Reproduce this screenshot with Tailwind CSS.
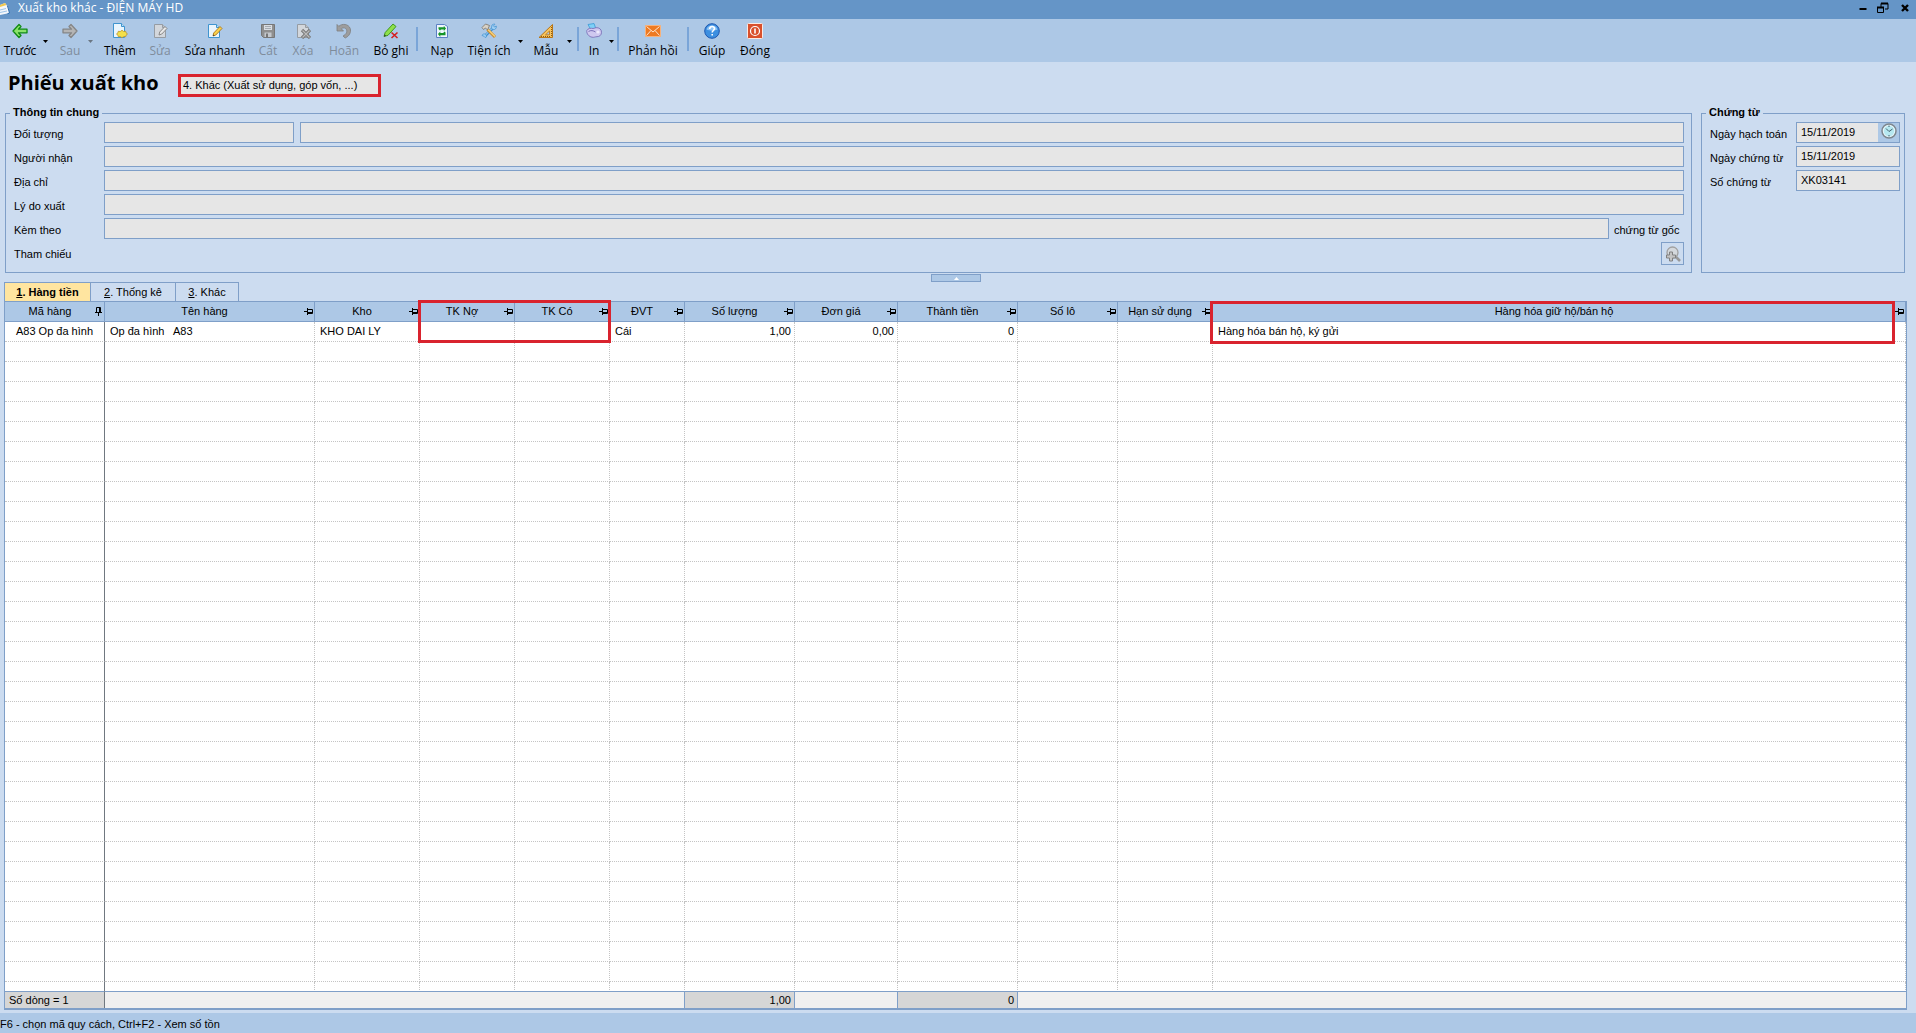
<!DOCTYPE html>
<html lang="vi">
<head>
    <meta charset="UTF-8">
    <meta name="viewport" content="width=device-width, initial-scale=1.0">
    <title>Xuất kho khác - ĐIỆN MÁY HD</title>
    <script src="https://cdn.jsdelivr.net/npm/@tailwindcss/browser@4"></script>
</head>
<body class="h-screen flex flex-col overflow-hidden bg-[#ccdcf0] text-black text-[11px] leading-4 font-['Liberation_Sans',Arial,sans-serif]">

    <!-- Shared icons -->
    <svg class="hidden">
        <symbol id="pin" viewBox="0 0 9 7"><path d="M0 3.500h3M3.500 0v7M4 1.500h4.500v4H4M4 4.500h4" fill="none" stroke="#000"/></symbol>
        <symbol id="pinDown" viewBox="0 0 7 9"><path d="M3.500 9V6M0 5.500h7M1.500 5V0.500h4V5M4.500 1v4" fill="none" stroke="#000"/></symbol>
        <symbol id="page" viewBox="0 0 16 16"><path d="M2.500 1.500h8l3 3v10h-11z" fill="#eaf5fd" stroke="#3f94cf"/><path d="M10.500 1.500v3h3" fill="#bfe0f5" stroke="#3f94cf"/></symbol>
        <symbol id="pageGray" viewBox="0 0 16 16"><path d="M2.500 1.500h8l3 3v10h-11z" fill="#d3d7dc" stroke="#969ca3"/><path d="M10.500 1.500v3h3" fill="#bcc1c7" stroke="#969ca3"/></symbol>
    </svg>

    <!-- Title bar -->
    <header class="h-[19px] shrink-0 flex items-center bg-[#6595c7] pr-[7px] text-white">
        <svg class="w-3 h-4 shrink-0" viewBox="0 0 12 16"><path d="M0 3l5-2 3 4 1.500 6-9.500 2z" fill="#f3f7fb"/><path d="M0 3l5-2 1.500 2L0 5z" fill="#f1c84e"/><path d="M0 8l6-1.500M0 10.500l7-1.500" stroke="#9cc3e8"/><path d="M7.500 4l2 7-2 .8" fill="none" stroke="#2f6fb0"/></svg>
        <span class="flex-1 pl-1.5 pb-1 text-[12px] font-['Open_Sans','Noto_Sans',sans-serif]">Xuất kho khác - ĐIỆN MÁY HD</span>
        <button type="button" aria-label="Thu nhỏ" class="mr-2.5 pb-1"><svg class="w-2 h-2" viewBox="0 0 8 8"><path d="M0.500 5h7" stroke="#000" stroke-width="2"/></svg></button>
        <button type="button" aria-label="Khôi phục" class="mr-3 pb-1"><svg class="w-3 h-3" viewBox="0 0 12 12"><path d="M4 5V1.500h7V7H8M0.500 5.500h6v5h-6z" fill="none" stroke="#000"/><path d="M4 1.500h7M0 5.500h7" stroke="#000" stroke-width="2"/></svg></button>
        <button type="button" aria-label="Đóng cửa sổ" class="pb-1"><svg class="w-2 h-2" viewBox="0 0 8 8"><path d="M1 1l6 6M7 1L1 7" stroke="#000" stroke-width="2.400"/></svg></button>
    </header>

    <!-- Toolbar -->
    <nav class="h-[43px] shrink-0 flex items-start bg-[#adc8e6] pt-1 whitespace-nowrap text-[12px] font-['Open_Sans','Noto_Sans',sans-serif]">
        <button type="button" class="w-10 flex flex-col items-center gap-1">
            <svg class="w-4 h-4" viewBox="0 0 16 16"><path d="M7 1.500L1 8l6 6.500 2-2L6.500 9.800H15V6.200H6.500L9 3.500z" fill="#8be36a" stroke="#0f8a12" stroke-width="1.300" stroke-linejoin="round"/></svg>
            <span>Trước</span>
        </button>
        <button type="button" aria-label="Trước: tùy chọn" class="w-3 h-9 pl-[3px] flex items-center"><svg class="w-[5px] h-[3px]" viewBox="0 0 5 3"><path d="M0 0h5L2.500 3z"/></svg></button>
        <button type="button" class="w-9 flex flex-col items-center gap-1 text-[#7f8c9b]">
            <svg class="w-4 h-4" viewBox="0 0 16 16"><path d="M9 1.500L15 8l-6 6.500-2-2L9.500 9.800H1V6.200h8.500L7 3.500z" fill="#b5b5b5" stroke="#858585" stroke-width="1.300" stroke-linejoin="round"/></svg>
            <span>Sau</span>
        </button>
        <button type="button" aria-label="Sau: tùy chọn" class="w-[10px] h-9 flex items-center"><svg class="w-[5px] h-[3px]" viewBox="0 0 5 3"><path d="M0 0h5L2.500 3z" fill="#6a7683"/></svg></button>
        <button type="button" class="w-11 flex flex-col items-center gap-1">
            <svg class="w-4 h-4" viewBox="0 0 16 16"><path d="M1.500 .5h8l3 3v11h-11z" fill="#eaf5fd" stroke="#3f94cf"/><path d="M9.500 .5v3h3" fill="#bfe0f5" stroke="#3f94cf"/><path d="M10 7.300l1.700 1.200 2-.2.300 1.400 1.500 1.300-1.500 1.300-.3 1.400-2-.2L10 14.700l-1.700-1.200-2 .2-.3-1.400L4.500 11 6 9.700l.3-1.400 2 .2z" fill="#f3e04a" stroke="#b8922a" stroke-width=".8"/></svg>
            <span>Thêm</span>
        </button>
        <button type="button" class="w-9 flex flex-col items-center gap-1 text-[#7f8c9b]">
            <svg class="w-4 h-4" viewBox="0 0 16 16"><use href="#pageGray"/><path d="M7 12l.7-3L13 3.500l2 2L9.800 11z" fill="#e8e8e8" stroke="#888"/></svg>
            <span>Sửa</span>
        </button>
        <button type="button" class="w-[74px] flex flex-col items-center gap-1">
            <svg class="w-4 h-4" viewBox="0 0 16 16"><path d="M1.500 1.500h8l3 3v10h-11z" fill="#eaf5fd" stroke="#3f94cf"/><path d="M9.500 1.500v3h3" fill="#bfe0f5" stroke="#3f94cf"/><path d="M6 13l.7-3L13 3.500l2 2L8.800 12z" fill="#fbd24c" stroke="#a9761c" stroke-width=".9"/><path d="M6 13l.4-1.600 1.200 1.200z" fill="#333"/></svg>
            <span>Sửa nhanh</span>
        </button>
        <button type="button" class="w-8 flex flex-col items-center gap-1 text-[#7f8c9b]">
            <svg class="w-4 h-4" viewBox="0 0 16 16"><path d="M1.500 1.500h13v13h-11l-2-2z" fill="#8f8f8f" stroke="#777"/><path d="M4 2h8v5H4z" fill="#d9dde2"/><path d="M4.500 9.500h7V14h-7z" fill="#c4c8cd"/><path d="M6 10.500h2V14H6z" fill="#777"/><path d="M5 3.500h6M5 5.500h6" stroke="#a5abb2"/></svg>
            <span>Cất</span>
        </button>
        <button type="button" class="w-[38px] flex flex-col items-center gap-1 text-[#7f8c9b]">
            <svg class="w-4 h-4" viewBox="0 0 16 16"><use href="#pageGray"/><path d="M7 7l8 8M15 7L7 15" stroke="#777" stroke-width="3.200"/><path d="M7.500 7.500l7 7M14.500 7.500L7.500 14.500" stroke="#bbb" stroke-width="1.200"/></svg>
            <span>Xóa</span>
        </button>
        <button type="button" class="w-11 flex flex-col items-center gap-1 text-[#7f8c9b]">
            <svg class="w-4 h-4" viewBox="0 0 16 16"><path d="M1 1.500l1.800 1.800C6 .3 12.500.7 14.200 5.500c1.200 3.700-1 7.800-5 9.500L7 13c3.200-1.600 4.400-4 3.500-6.300C9.700 4.500 7 4.300 5.300 5.800L7.500 8H1z" fill="#9d9d9d" stroke="#7d7d7d" stroke-width=".8"/></svg>
            <span>Hoãn</span>
        </button>
        <button type="button" class="w-[50px] flex flex-col items-center gap-1">
            <svg class="w-4 h-4" viewBox="0 0 16 16"><path d="M1 13.500l1.200-4L10 1l3 2.500-8 8.800z" fill="#8fe04a" stroke="#3e9a1c"/><path d="M1 13.500l.6-2 1.500 1.300z" fill="#333"/><path d="M8.500 9.500l6 5.500M14.500 9.500l-6 5.500" stroke="#d41f1f" stroke-width="1.600"/></svg>
            <span>Bỏ ghi</span>
        </button>
        <span class="w-[2px] h-6 mt-1 mr-1 bg-[#7aa5d8]"></span>
        <button type="button" class="w-10 flex flex-col items-center gap-1">
            <svg class="w-4 h-4" viewBox="0 0 16 16"><path d="M2.500 1.500h8l3 2v11h-11z" fill="#eef6fd" stroke="#5b7fc4"/><path d="M4.500 6V4.200h5.300V2.800L12 5.500 9.800 8V6.500H7L6 7.500zM11.500 9.500v2.800H6.300V14L4 11l2.300-2.500V10h2.900l1.300-1.500z" fill="#149428"/></svg>
            <span>Nạp</span>
        </button>
        <button type="button" class="w-[54px] flex flex-col items-center gap-1">
            <svg class="w-4 h-4" viewBox="0 0 16 16"><path d="M4 13L12 5" stroke="#3f8fd0" stroke-width="2.800"/><path d="M4 12.500L11.500 5" stroke="#b9def7"/><path d="M11 2c1-1 2.500-1 3-.8l-1.500 1.600 1 1.200L15.300 3c.3 1.200-.3 3-1.800 3.500-1.500.4-3-.5-3-2zM1 12.500c.5-1.500 2-2 3.500-1.200 1.200 1 1.200 2.500 0 3.500l-1.600-1.600z" fill="#9fd0f4" stroke="#3f8fd0" stroke-width=".7"/><path d="M6.500 6.500l7.500 7.500" stroke="#c98b30" stroke-width="3"/><path d="M7 6.500l7 7" stroke="#f7d27a" stroke-width="1.400"/><path d="M1 4.500L4.500 1l4 1.500L6.500 7 4.500 5 2.500 6.500z" fill="#d9d2c6" stroke="#7a7166" stroke-width=".8"/></svg>
            <span>Tiện ích</span>
        </button>
        <button type="button" aria-label="Tiện ích: tùy chọn" class="w-[9px] h-9 pl-[2px] flex items-center"><svg class="w-[5px] h-[3px]" viewBox="0 0 5 3"><path d="M0 0h5L2.500 3z"/></svg></button>
        <button type="button" class="w-[42px] flex flex-col items-center gap-1">
            <svg class="w-4 h-4" viewBox="0 0 16 16"><path d="M14.500 1.500v13H1z" fill="#f7c35c" stroke="#b87516" stroke-linejoin="round"/><path d="M11.500 8v3.800H7.500z" fill="#adc8e6" stroke="#b87516" stroke-width=".8"/><path d="M3 13.500h10M13.500 4v9" stroke="#8a5a14" stroke-dasharray="1 1"/></svg>
            <span>Mẫu</span>
        </button>
        <button type="button" aria-label="Mẫu: tùy chọn" class="w-[10px] h-9 flex items-center"><svg class="w-[5px] h-[3px]" viewBox="0 0 5 3"><path d="M0 0h5L2.500 3z"/></svg></button>
        <span class="w-[2px] h-6 mt-1 bg-[#7aa5d8]"></span>
        <button type="button" class="w-[30px] flex flex-col items-center gap-1">
            <svg class="w-4 h-4" viewBox="0 0 16 16"><path d="M2 1.500l6-1L10 6 5 7z" fill="#7fd0f7" stroke="#3a9bd6" stroke-width=".8"/><path d="M.8 7.500C2 5.200 5 5 7 5.500l3-.8c3-.3 5.500 1.500 5.500 4.500s-2 4.500-4.500 4.500c-2 0-3 1-5 .5-3-.5-5.700-3.500-5.200-6.700z" fill="#cfc8ef" stroke="#7a70b8" stroke-width=".9"/><path d="M2.500 8.500c2-1.500 5-1 7 .5" fill="none" stroke="#7a70b8"/><circle cx="12" cy="9" r="1.600" fill="#eeeafc"/></svg>
            <span>In</span>
        </button>
        <button type="button" aria-label="In: tùy chọn" class="w-2 h-9 flex items-center"><svg class="w-[5px] h-[3px]" viewBox="0 0 5 3"><path d="M0 0h5L2.500 3z"/></svg></button>
        <span class="w-[2px] h-6 mt-1 bg-[#7aa5d8]"></span>
        <button type="button" class="w-[68px] flex flex-col items-center gap-1">
            <svg class="w-4 h-4" viewBox="0 0 16 16"><path d="M.5 2.500h15v11H.5z" fill="#ee7a22" stroke="#f6b27c"/><path d="M1.500 3.500L8 9l6.500-5.500M1.500 12.500L6 7.500M14.500 12.500L10 7.500" fill="none" stroke="#fde3cc"/></svg>
            <span>Phản hồi</span>
        </button>
        <span class="w-[2px] h-6 mt-1 mr-0.5 bg-[#7aa5d8]"></span>
        <button type="button" class="w-[42px] flex flex-col items-center gap-1">
            <svg class="w-4 h-4" viewBox="0 0 16 16"><circle cx="8" cy="8" r="7.300" fill="#3d8fe0" stroke="#1d57b0"/><path d="M2.500 6.500a5.800 5.800 0 0 1 11 0c-3 1.500-8 1.500-11 0z" fill="#8fc4f6"/><path d="M5.700 6c0-3.200 4.800-3.200 4.800-.4C10.500 7.500 8.200 7.500 8.200 9.500M8.200 11v1.600" fill="none" stroke="#fff" stroke-width="1.600"/></svg>
            <span>Giúp</span>
        </button>
        <button type="button" class="w-11 flex flex-col items-center gap-1">
            <svg class="w-4 h-4" viewBox="0 0 16 16"><rect x=".5" y=".5" width="15" height="15" rx="1" fill="#d9502c" stroke="#fbe9e2"/><circle cx="8" cy="8" r="4.500" fill="none" stroke="#fff" stroke-width="1.200"/><path d="M8 5.500v5" stroke="#fff" stroke-width="1.600"/></svg>
            <span>Đóng</span>
        </button>
    </nav>

    <!-- Voucher heading -->
    <div class="h-[43px] shrink-0 flex items-center pl-2">
        <h1 class="w-[170px] pb-0.5 whitespace-nowrap text-[20px] leading-7 font-bold font-['Open_Sans','Noto_Sans',sans-serif]">Phiếu xuất kho</h1>
        <input type="text" readonly aria-label="Loại phiếu" value="4. Khác (Xuất sử dụng, góp vốn, ...)" class="w-[203px] h-[23px] mt-1 px-0.5 pb-0.5 border-3 border-[#d9232e] bg-[#e6e6e6]">
    </div>

    <!-- General info and voucher info -->
    <div class="shrink-0 flex gap-[9px] pl-[5px] pr-[11px]">
        <fieldset class="flex-1 min-w-0 border border-[#7f9fc8] pl-2 pr-[7px] pt-px pb-[7px]">
            <legend class="-ml-1 px-[3px] pb-0.5 leading-[14px] font-bold">Thông tin chung</legend>
            <div class="flex flex-col gap-[3px]">
                <div class="flex">
                    <label for="objectCode" class="w-[90px] pt-1">Đối tượng</label>
                    <input id="objectCode" type="text" readonly class="w-[190px] h-[21px] mr-1.5 px-1 border border-[#7f9fc8] bg-[#e6e6e6]">
                    <input type="text" readonly aria-label="Tên đối tượng" class="flex-1 h-[21px] px-1 border border-[#7f9fc8] bg-[#e6e6e6]">
                </div>
                <div class="flex">
                    <label for="receiver" class="w-[90px] pt-1">Người nhận</label>
                    <input id="receiver" type="text" readonly class="flex-1 h-[21px] px-1 border border-[#7f9fc8] bg-[#e6e6e6]">
                </div>
                <div class="flex">
                    <label for="address" class="w-[90px] pt-1">Địa chỉ</label>
                    <input id="address" type="text" readonly class="flex-1 h-[21px] px-1 border border-[#7f9fc8] bg-[#e6e6e6]">
                </div>
                <div class="flex">
                    <label for="reason" class="w-[90px] pt-1">Lý do xuất</label>
                    <input id="reason" type="text" readonly class="flex-1 h-[21px] px-1 border border-[#7f9fc8] bg-[#e6e6e6]">
                </div>
                <div class="flex">
                    <label for="attach" class="w-[90px] pt-1">Kèm theo</label>
                    <input id="attach" type="text" readonly class="flex-1 h-[21px] px-1 border border-[#7f9fc8] bg-[#e6e6e6]">
                    <span class="w-[75px] pl-[5px] pt-1 whitespace-nowrap">chứng từ gốc</span>
                </div>
                <div class="flex justify-between">
                    <span class="pt-1">Tham chiếu</span>
                    <button type="button" aria-label="Tìm tham chiếu" class="w-[23px] h-[23px] flex items-center justify-center border border-[#7f9fc8]">
                        <svg class="w-4 h-4" viewBox="0 0 16 16"><path d="M10.500 10.500L15 15" stroke="#999" stroke-width="2.600"/><circle cx="7.500" cy="6.500" r="5.500" fill="#d4d8dc" stroke="#a0a0a0" stroke-width="1.300"/><path d="M4.500 6h3v3h3v3h-3v3h-3v-3h-3V9h3z" fill="#c4c4c4" stroke="#808080"/></svg>
                    </button>
                </div>
            </div>
        </fieldset>
        <fieldset class="w-[204px] border border-[#7f9fc8] pl-2 pr-1 pt-px">
            <legend class="-ml-1 px-[3px] pb-0.5 leading-[14px] font-bold">Chứng từ</legend>
            <div class="flex flex-col gap-[3px]">
                <div class="flex">
                    <label for="postDate" class="flex-1 pt-1">Ngày hạch toán</label>
                    <div class="w-[104px] h-[21px] flex border border-[#7f9fc8] bg-[#e6e6e6]">
                        <input id="postDate" type="text" readonly value="15/11/2019" class="flex-1 min-w-0 pl-1 pb-0.5">
                        <button type="button" aria-label="Chọn giờ" class="w-[21px] flex justify-center bg-[#adc8e6]">
                            <svg class="w-4 h-4" viewBox="0 0 16 16"><circle cx="8" cy="8" r="7" fill="#e8f6fa" stroke="#7d868e" stroke-width="1.500"/><circle cx="8" cy="8" r="5.200" fill="#b6e8f0"/><path d="M5 5.500l3 3 3.500-2.500" fill="none" stroke="#44606e"/><path d="M8 12v1.500M8 2.500V4" stroke="#44606e"/></svg>
                        </button>
                    </div>
                </div>
                <div class="flex">
                    <label for="docDate" class="flex-1 pt-1">Ngày chứng từ</label>
                    <input id="docDate" type="text" readonly value="15/11/2019" class="w-[104px] h-[21px] px-1 pb-0.5 border border-[#7f9fc8] bg-[#e6e6e6]">
                </div>
                <div class="flex">
                    <label for="docNo" class="flex-1 pt-1">Số chứng từ</label>
                    <input id="docNo" type="text" readonly value="XK03141" class="w-[104px] h-[21px] px-1 pb-0.5 border border-[#7f9fc8] bg-[#e6e6e6]">
                </div>
            </div>
        </fieldset>
    </div>

    <!-- Collapse handle -->
    <div class="h-[9px] shrink-0 flex justify-center items-end pr-1">
        <button type="button" aria-label="Thu gọn" class="w-[50px] h-2 flex items-center justify-center border border-[#7f9fc8] bg-[#adc8e6]"><svg class="w-[5px] h-[3px]" viewBox="0 0 5 3"><path d="M0 3h5L2.500 0z" fill="#fff"/></svg></button>
    </div>

    <!-- Tabs -->
    <div class="h-[19px] shrink-0 flex pl-1" role="tablist">
        <button type="button" role="tab" aria-selected="true" class="w-[87px] pb-px border border-b-0 border-[#7f9fc8] bg-[#ffe5a0] font-bold"><u>1</u>. Hàng tiền</button>
        <button type="button" role="tab" class="w-[85px] pb-px border-t border-r border-[#7f9fc8]"><u>2</u>. Thống kê</button>
        <button type="button" role="tab" class="w-[63px] pb-px border-t border-r border-[#7f9fc8]"><u>3</u>. Khác</button>
    </div>

    <!-- Item grid -->
    <div class="relative flex-1 min-h-0 flex flex-col ml-1 mr-[9px] mb-[2px]">
        <div class="flex-1 min-h-0 overflow-hidden border border-b-2 border-[#7f9fc8] bg-white">
            <table class="w-full table-fixed border-separate border-spacing-0">
                <colgroup>
                    <col class="w-[100px]"><col class="w-[210px]"><col class="w-[105px]"><col class="w-[95px]"><col class="w-[95px]"><col class="w-[75px]"><col class="w-[110px]"><col class="w-[103px]"><col class="w-[120px]"><col class="w-[100px]"><col class="w-[95px]"><col>
                </colgroup>
                <thead id="gridHead" class="sticky top-0"></thead>
                <tbody id="gridBody"></tbody>
                <tfoot class="sticky bottom-0">
                    <tr class="h-[17px]">
                        <td class="h-[17px] border-t border-t-[#7f9fc8] border-r border-r-[#707880] bg-[#d6d6d6] pl-1 leading-4">Số dòng = 1</td>
                        <td colspan="5" class="border-t border-r border-[#7f9fc8] bg-[#f0f0f0]"></td>
                        <td class="border-t border-r border-[#7f9fc8] bg-[#d6d6d6] pr-[3px] text-right leading-4">1,00</td>
                        <td class="border-t border-r border-[#7f9fc8] bg-[#f0f0f0]"></td>
                        <td class="border-t border-r border-[#7f9fc8] bg-[#d6d6d6] pr-[3px] text-right leading-4">0</td>
                        <td colspan="3" class="border-t border-[#7f9fc8] bg-[#f0f0f0]"></td>
                    </tr>
                </tfoot>
            </table>
        </div>
        <!-- Highlight frames -->
        <div class="absolute left-[414px] -top-px w-[193px] h-[43px] border-3 border-[#d9232e] pointer-events-none"></div>
        <div class="absolute left-[1206px] right-3 top-0 h-[43px] border-3 border-[#d9232e] pointer-events-none"></div>
    </div>

    <!-- Status bar -->
    <footer class="h-5 shrink-0 mt-px flex items-center bg-[#adc8e6] pt-0.5">F6 - chọn mã quy cách, Ctrl+F2 - Xem số tồn</footer>

    <script>
        const columns = ['Mã hàng', 'Tên hàng', 'Kho', 'TK Nợ', 'TK Có', 'ĐVT', 'Số lượng', 'Đơn giá', 'Thành tiền', 'Số lô', 'Hạn sử dụng', 'Hàng hóa giữ hộ/bán hộ'];
        const item = ['A83 Op đa hình', 'Op đa hình   A83', 'KHO DAI LY', '', '', 'Cái', '1,00', '0,00', '0', '', '', 'Hàng hóa bán hộ, ký gửi'];
        const numeric = [6, 7, 8];

        // Header row, first column is the frozen one
        document.getElementById('gridHead').innerHTML = '<tr>' + columns.map((name, i) => `
            <th class="h-[20px] p-0 border-b border-r border-[#7f9fc8] bg-[#adc8e6] font-normal leading-4">
                <div class="flex items-center pb-px">
                    <span class="flex-1 text-center whitespace-nowrap">${name}</span>
                    ${i === 0 ? '<svg class="w-[7px] h-[9px] mr-[2px]"><use href="#pinDown"/></svg>' : '<svg class="w-[9px] h-[7px] mr-px"><use href="#pin"/></svg>'}
                </div>
            </th>`).join('') + '</tr>';

        function cellClass(i) {
            if (i === 0) return 'h-[20px] p-0 pb-px text-center whitespace-pre border-b border-b-[#c4c4c4] [border-bottom-style:dotted] border-r border-r-[#707880]';
            if (numeric.includes(i)) return 'h-[20px] p-0 pb-px pr-[3px] text-right border-b border-r border-dotted border-[#c4c4c4]';
            return 'h-[20px] p-0 pb-px pl-[5px] whitespace-pre border-b border-r border-dotted border-[#c4c4c4]';
        }

        // One voucher line, then blank lines down to the footer
        let rows = '';
        for (let r = 0; r < 80; r++) {
            rows += '<tr>' + columns.map((c, i) => `<td class="${cellClass(i)}">${r === 0 ? item[i] : ''}</td>`).join('') + '</tr>';
        }
        document.getElementById('gridBody').innerHTML = rows;
    </script>
</body>
</html>
